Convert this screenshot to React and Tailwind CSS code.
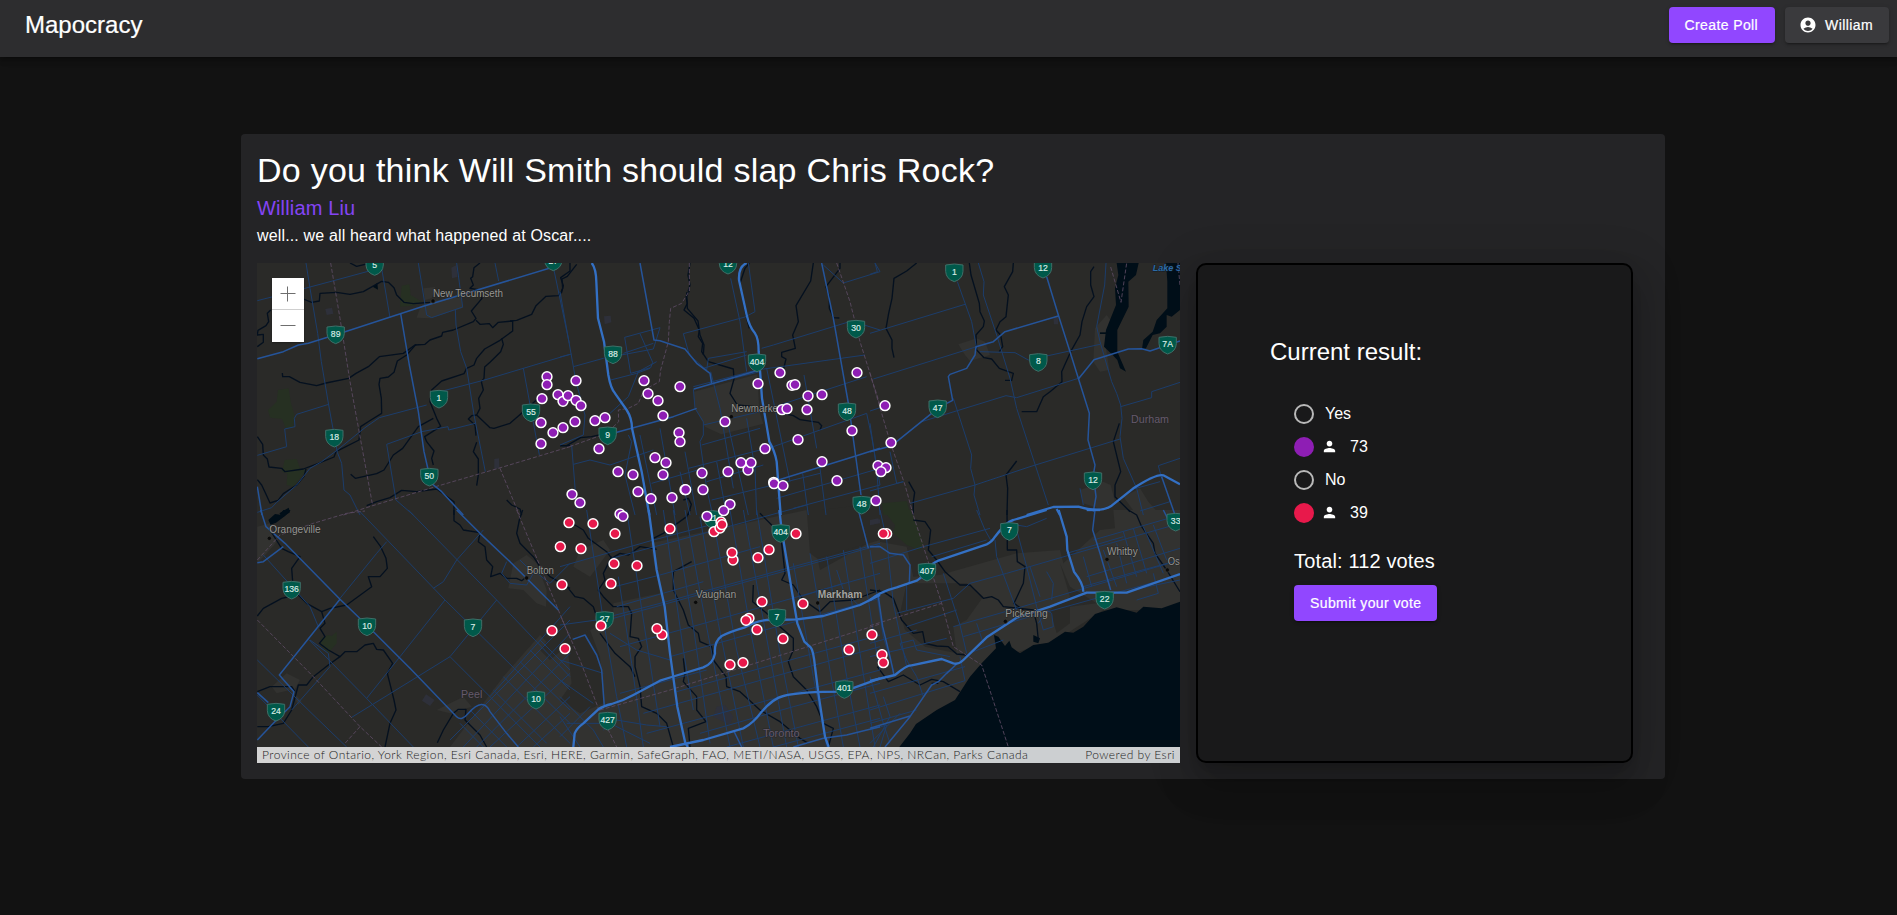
import React from "react";
import { MdAccountCircle, MdPerson } from "react-icons/md";

/* Map tiles: each holds its own drawing, placed by an offset on a shared canvas. */
const TILES = [
  {
    x: 0, y: 0,
    urban: ["M528 140L632 125L640 158L542 190L500 188L510 160Z", "M520 100L556 96L545 130L525 135Z"],
    park: ["M84 405L116 400L122 440L133 480L130 516L108 522L96 492L60 488L54 465L80 440Z", "M455 92L478 88L482 120L516 140L490 152L450 155Z", "M104 615L140 612L150 640L170 645L130 695L110 690L112 655L96 650Z"],
    grey: ["M604 38L620 30L622 66L606 70Z", "M226 162L246 158L250 176L230 180Z", "M733 612L747 610L748 640L733 642Z"],
    water: ["M88 775L116 758L120 772L100 785Z", "M368 95L382 83L384 104Z"],
    river: [
      "M160 132L185 142L208 138L210 115L260 112L300 118L340 110L372 92L395 79L415 82L432 98L440 120L462 142L490 146L540 142",
      "M300 24L320 34L345 28L365 24", "M62 165L52 175L56 200L48 212L24 226L22 240L40 238L40 262L22 275",
      "M690 24L672 38L668 65L662 70L670 90L660 100L685 104L696 130L664 168L678 190L670 200L610 225L578 232L575 243L540 255L525 268L495 270L460 295L388 305L355 335L318 355L296 370L228 384L200 392L150 382L118 365L98 365L97 354",
      "M498 268L470 300L442 318L432 352L415 366L390 370L387 388L394 430L395 475L358 498L332 515L327 555L258 590L252 606L205 625L160 642L105 650L95 640L57 636L52 612L40 600L38 568L22 545",
      "M168 642L162 664L140 690L100 716L84 736L60 744L48 718L35 690L22 674",
      "M678 196L690 208L718 206L728 218L745 202L788 198L788 228L750 256L704 282L680 310L672 330L650 340L642 356L575 378L545 405L540 440L560 490L572 514L524 545L530 560L552 588L545 610L550 630",
      "M550 490L505 515L458 580L430 600L402 645L380 656L316 670L302 658",
      "M960 24L960 48L932 68L940 92L935 112L925 122L888 124L858 152L845 178L800 196L780 198",
      "M755 250L760 268L752 290L720 322L704 336L702 370L694 380L700 405L686 430L690 460L680 480L720 518L732 520L780 505L820 470L870 425",
      "M678 542L675 510L655 492L665 482L680 480", "M680 562L670 590L685 612L685 660L680 692", "M350 752L380 740L420 728L455 706L500 710L560 702L612 740L612 780", "M770 735L785 750L810 762L815 780", "M930 572L960 572",
    ],
    minor: [
      "M22 137L120 112L240 80L380 42", "M168 24L180 100L203 235L214 320L236 450L262 592L275 625L282 705L300 720L330 780", "M395 40L420 188", "M505 24L530 180L545 188L638 156L620 24", "M616 165L618 210L632 290L650 340L672 480L706 650", "M735 24L746 78", "M910 36L958 265", "M960 298L700 376L570 410",
      "M530 450L388 488L345 518L262 585L215 620L180 640L140 690L80 742L65 758L22 772", "M236 448L140 478L133 490L135 515L104 522L110 575L22 601", "M676 505L596 525L594 515L515 530L410 568L438 735L490 780", "M820 340L868 600",
    ],
    major: ["M22 311L100 290L145 270L175 265L290 229L520 154L930 30", "M452 176L478 330L505 470L522 590L538 660", "M538 680L575 710L640 780", "M22 695L36 780"],
    hwy: [],
    border: ["M242 24L270 190L300 380L368 752", "M280 780L368 752L560 694L745 640L960 575", "M750 640L808 780"],
    shields: [[374, 34, "5"], [910, 20, "27"], [257, 239, "89"], [567, 432, "1"], [253, 549, "18"], [843, 473, "55"], [538, 666, "50"]],
  },
  {
    x: 930, y: 0,
    urban: ["M402 410L592 358L598 470L610 506L484 538L436 516L404 460Z"],
    park: [], grey: ["M132 184L152 182L154 202L134 208Z"], water: [],
    river: [
      "M50 28L22 64L6 72L8 100L0 118",
      "M388 108L378 125L382 145L372 165L402 190L418 225L415 245L428 265L425 290L445 320L520 342L522 372L510 415L532 450L590 456L700 482L720 494L775 502L785 512L780 525",
      "M390 24L384 60L390 90L384 110", "M380 112L382 160L414 198L420 240L432 270L430 300",
      "M568 24L555 40L540 85L548 130L555 165L560 190L568 220",
      "M760 24L752 78L708 152L715 200L698 240L706 280L665 292L665 305L678 312L670 345", "M840 24L840 40L798 95L808 125L808 160L820 188L838 189",
      "M0 572L20 572L62 548L95 545L125 538", "M370 735L385 730L394 748L385 780",
    ],
    minor: [
      "M0 110L48 380L75 480L70 540L0 570", "M0 306L35 297", "M40 335L130 310L280 282L300 218L194 247L212 355L272 338L278 322L240 236", "M190 295L280 265", "M152 375L230 355L270 340", "M150 475L205 425L235 350L290 320",
      "M370 236L555 186L585 170L565 24", "M370 236L388 300L440 345L445 310L560 290", "M605 280L640 270L875 198L960 225", "M430 340L560 300", "M512 70L540 200L560 350", "M452 350L480 460L520 700", "M445 388L600 350", "M400 395L590 345L915 300",
      "M205 540L215 560L195 660L225 780", "M35 570L50 760", "M40 628L90 615L150 630L280 585", "M430 510L600 470L720 430L920 365", "M425 570L600 520", "M400 400L405 460L430 500L430 540L420 560L440 700L458 780", "M385 640L640 575L920 475", "M375 590L410 780", "M240 540L290 780", "M500 490L565 780", "M560 490L585 640L590 780", "M440 680L610 630", "M455 735L640 690L780 655", "M275 685L430 640", "M728 655L745 780", "M780 640L798 780", "M920 475L935 545L960 690", "M650 730L960 640", "M732 360L770 580", "M790 30L850 84L960 50L945 24", "M700 760L960 690", "M620 340L690 680",
      "M300 520L345 780", "M360 650L390 780", "M470 620L500 780",
    ],
    major: ["M240 24L282 255L300 257L375 282L410 325L450 355L455 385", "M160 535L340 485L410 460", "M402 402L598 345", "M785 24L820 190L866 450L903 720", "M655 675L880 605L960 580"],
    hwy: ["M95 24Q108 40 109 80L114 190L132 260L145 360Q152 400 165 415L200 465Q216 490 216 520L245 650L268 780", "M560 24Q535 35 537 75L560 180Q568 215 585 235Q596 250 596 290L606 430L628 560Q645 590 650 620L662 780"],
    border: ["M388 24L388 108L365 145L332 160L328 200L325 260L302 345L298 380L252 405L235 445L205 460L175 465L176 500L140 535L20 578", "M830 24L870 140L900 260L960 450"],
    shields: [[504, 30, "12"], [159, 299, "88"], [591, 323, "404"], [888, 222, "30"], [861, 470, "48"], [143, 542, "9"], [905, 750, "48"]],
  },
  {
    x: 1860, y: 0,
    urban: ["M265 268L320 250L345 260L360 300L300 318L285 300Z", "M675 220L710 180L725 200L705 260L718 345L690 350L670 320Z", "M630 705L700 680L722 690L735 740L700 765L640 745Z", "M760 725L810 700L835 740L870 780L800 780Z"],
    park: ["M36 745L110 738L122 780L40 780Z"], grey: ["M550 186L564 184L564 208L552 208Z"],
    water: ["M740 24L806 24L798 60L775 80L776 155L742 225L742 290L768 350L750 340L742 315L728 300L702 275L708 225L722 190L738 150L735 100L745 60Z", "M888 24L930 24L930 165L905 185L890 180L890 215L870 235L848 240L828 280L816 282L820 255L848 230L860 195L892 160L892 80Z", "M690 232L712 232L712 237L690 237Z"],
    river: [
      "M140 24L110 48L72 70L66 130L56 175L48 220L66 255L66 280L72 308", "M298 24L303 60L328 145L330 170L343 198L340 215L318 240L320 285L342 308L365 312L388 340L430 355L425 376L405 376",
      "M430 24L428 50L403 95L415 120L408 185L390 200L378 225L392 240L398 275L388 290", "M672 35L662 50L662 90L672 125L650 155L636 200L630 240L602 290L575 350L576 380L540 410L520 425L500 470L455 470",
      "M440 618L408 660L413 700L411 780", "M116 680L134 712L130 740L130 780", "M748 505L730 560L752 650L735 690L735 725L780 770",
    ],
    minor: [
      "M0 58L22 50L15 24", "M0 235L285 148", "M262 80L305 200L320 280", "M10 372L320 275", "M325 24L342 80L340 120L380 240L420 370L440 460L535 750", "M330 290L435 293L475 315L690 268", "M155 500L408 422L440 428L625 370", "M250 430L305 600L302 640L315 690L312 720L330 780", "M120 745L315 690L480 635L750 552", "M708 24L704 90L680 215L690 260L725 380L740 415L752 450L756 490L750 545L760 610L800 700L820 780", "M752 455L845 428L845 410L930 382", "M930 610L865 632L875 670", "M0 505L20 640L30 780", "M60 590L80 685L100 680", "M0 708L100 680", "M0 468L40 455", "M630 700L640 750", "M780 705L870 680", "M810 768L900 740",
    ],
    major: ["M0 590L65 572L185 475", "M230 445L248 436L235 365L240 358L290 340L315 300L318 275L370 260L405 230L565 183", "M530 65L565 180L600 290L658 475L654 555L675 630L670 660", "M625 372L672 314L775 282L815 281L840 288L930 258", "M675 700L678 725L670 770", "M875 665L915 780"],
    hwy: ["M470 780L550 756L625 755Q690 775 725 752L790 700Q860 655 880 661L930 688", "M560 762L570 780"],
    border: ["M0 355L60 560L105 690L130 780", "M722 36L753 142L770 24", "M924 24L930 92"],
    shields: [[253, 53, "1"], [519, 42, "12"], [893, 270, "7A"], [505, 322, "8"], [203, 461, "47"], [669, 677, "12"]],
  },
  {
    x: 0, y: 765,
    urban: ["M22 50L60 40L85 90L50 130L22 158Z", "M65 530L110 490L150 510L130 545L155 575L145 585L120 540L80 550Z", "M790 160L830 135L860 160L890 240L888 290L860 280L820 240L775 235Z", "M600 711L760 500L870 375L890 395L870 420L900 450L960 400L960 711Z", "M560 600L640 560L665 590L600 610Z"],
    park: ["M212 385L235 375L245 378L260 365L260 400L235 430L212 405Z"], grey: ["M528 553L554 570L540 588L516 572Z"],
    water: ["M55 30L75 12L90 14L100 0L122 0L105 18L78 38L62 44Z"],
    river: [
      "M612 0L612 32L630 45L640 60L690 68L685 95L705 110L710 150L728 170L722 200L750 190L770 205L800 205L815 212L830 200", "M818 0L808 30L800 70L810 100L850 140L870 170L900 200L960 235",
      "M60 60L95 115L115 125L150 140L125 175L130 240L170 280L215 305L240 295L290 285L365 230L355 200L390 200L412 175L408 145L392 110L370 80",
      "M140 255L95 265L40 295L22 318", "M215 305L225 340L210 355L225 380L208 400L235 420L270 440L235 465L190 500L170 525L145 525L125 600L100 640L55 650L22 650", "M270 440L285 425L320 425L345 405L370 400L380 418L400 420L428 460L412 490L432 570L438 600L420 640L405 711", "M22 545L60 530L125 530L135 545", "M562 698L580 660L610 610L625 598L648 598L645 630L690 675L710 711",
    ],
    minor: [
      "M330 5L585 270L960 640", "M475 0L740 270L960 500", "M22 450L180 605L290 711", "M22 555L175 711", "M40 135L180 290L205 350", "M178 390L340 555L490 711", "M410 95L380 130L270 265", "M600 440L760 600L870 711", "M740 270L600 440L305 622", "M700 60L620 150L580 215L550 235", "M585 270L450 440L350 565", "M760 500L800 540L960 700", "M730 540L890 700", "M870 390L960 480", "M840 420L960 540", "M810 455L960 600", "M660 600L770 711", "M630 640L700 711", "M720 560L960 290", "M600 690L960 330", "M640 711L960 370", "M680 711L960 430", "M720 711L960 490", "M800 711L960 560", "M850 711L960 610", "M770 155L755 190L780 220L830 225L850 190L810 150", "M850 180L900 220L960 160", "M180 390L235 430L240 470L125 600",
    ],
    major: ["M32 0L48 50L105 100L270 268L350 345L480 475L620 620Q635 635 655 610Q700 560 720 605L770 670L805 711", "M22 158L40 155L100 110", "M270 268L88 495L132 545L120 590L70 640L22 690", "M22 548L55 578", "M620 0L690 70L780 155L850 225L925 300"],
    hwy: [],
    border: ["M22 330L190 500L330 650L395 711", "M330 650L285 700", "M22 150L90 75L190 40L290 10L345 3", "M800 0L925 300L960 385"],
    shields: [[125, 240, "136"], [351, 350, "10"], [669, 353, "7"], [78, 606, "24"], [858, 570, "10"]],
  },
  {
    x: 930, y: 765,
    urban: ["M0 530L40 470L20 390L160 330L160 280L300 250L270 100L600 30L740 0L780 180L960 80L960 760L0 760Z", "M60 120L130 90L150 120L90 200L40 170Z"],
    park: [], grey: ["M470 590L495 585L520 620L510 645L460 620Z", "M930 35L960 28L960 40L935 44Z"], water: [],
    dark: ["M20 390L90 360L120 440L130 580L60 610L0 570L35 520Z", "M740 0L780 0L960 -20L960 90L770 145L750 130Z"],
    river: [
      "M20 30L70 60L85 85L140 125L155 145L180 130L205 135L240 110L290 118", "M390 0L380 20L310 70L280 85", "M155 140L130 190L135 210L115 240L130 260L160 290L205 290L215 310L210 380L235 385L245 410L225 440L225 470L240 530L245 590L290 610L320 640L340 711",
      "M0 210L25 235L45 260L70 265L100 290L110 320", "M120 370L165 430L210 470L225 500", "M395 155L340 185L340 240L370 300L385 345L415 370L420 395L455 410L460 450L498 500L500 530L540 545L600 600L660 635L720 685L745 700",
      "M370 445L375 490L370 515L410 560L410 600L438 635L385 655L390 711", "M600 10L650 60L665 100L675 190L665 210L700 225L730 270L780 305L810 275L880 270L960 240", "M580 225L578 275L620 310L660 350L700 385L700 420L685 455L700 500L740 540L770 590L790 640L820 655L805 711",
    ],
    minor: [
      "M0 170L280 90L450 45", "M155 145L450 65L740 -15", "M145 235L300 195L600 110", "M160 325L450 245L960 105", "M170 290L430 215", "M0 345L110 330L300 280L700 170L960 100", "M180 410L450 335L960 190", "M330 440L560 375L960 265", "M180 550L440 480", "M350 545L960 375", "M250 610L480 545L960 410", "M260 670L700 550L960 480", "M420 670L700 590L960 520", "M500 711L960 585", "M640 711L960 625", "M0 450L130 490", "M0 510L100 580", "M0 560L100 660L130 711", "M0 620L60 711", "M0 680L90 590",
      "M80 0L130 330L170 560L200 711", "M175 200L215 460L250 711", "M200 0L250 330L300 650", "M310 0L370 420L400 600", "M340 0L400 350L450 700", "M375 0L430 300L510 711", "M420 20L475 340L550 711", "M460 30L530 420L600 711", "M510 0L575 380L640 711", "M550 0L610 330L680 711", "M590 0L660 430L715 711", "M700 160L760 500L800 711", "M750 130L810 480L850 711", "M800 140L860 500L900 711", "M850 120L900 430L945 711", "M900 110L950 430L960 480", "M150 370L230 420L330 450", "M130 660L170 630L260 645L320 650", "M20 640L150 640L270 700", "M720 260L850 220", "M830 180L850 240L900 290",
    ],
    major: ["M38 388L75 375L110 435L125 480L133 590", "M700 711L790 685L860 675L960 650", "M895 0L925 115", "M520 660L545 711"],
    hwy: ["M266 0L290 180L314 290L330 430L352 590L376 700L384 711", "M40 711L44 670Q50 655 70 640L115 598Q130 588 155 582Q190 572 220 555L300 512L345 498L430 472Q460 460 465 430Q462 395 485 378Q510 365 555 352Q600 325 650 330L710 328L790 318L900 285L960 255", "M330 711L430 690L550 655Q580 640 605 605Q640 565 670 558Q720 545 850 545L960 505", "M658 0L665 60L690 210L712 340L733 395L752 412Q760 420 765 470L775 550L795 680L806 711"],
    border: ["M5 325L60 450L115 595L145 660L170 711", "M120 600L330 540L960 342"],
    shields: [[458, 28, "11"], [662, 70, "404"], [134, 331, "27"], [651, 323, "7"], [853, 538, "401"], [143, 633, "427"]],
  },
  {
    x: 1860, y: 765,
    urban: ["M0 90L110 110L130 200L210 195L440 130L570 120L580 160L690 60L735 55L730 0L930 0L930 300L700 300L560 390L430 430L300 560L110 711L0 711Z"],
    park: ["M40 0L125 0L160 100L150 122L110 105L70 70L75 45Z"], grey: ["M0 30L25 25L28 38L0 46Z"],
    dark: ["M110 220L290 220L340 260L290 330L250 350L260 430L165 410L105 360L90 310Z", "M570 160L600 230L680 280L600 290L600 340L560 370L540 300L600 260Z"],
    water: ["M88 711L120 670L138 642L200 600L255 570L300 500L335 460L378 415L372 375L385 380L405 408L418 392L425 412L450 430L490 405L535 398L585 365L610 368L640 350L675 312L740 292L800 308L820 290L875 295L930 275L930 765L88 765Z", "M490 375L510 385L505 400L490 395Z"],
    river: [
      "M130 30L165 35L182 60L175 120L200 150L225 185L270 225L300 225L340 265L365 260L385 270L400 290L450 295L490 300L500 340L505 390", "M411 0L412 120L440 120L442 155L465 170L460 220L432 280L460 300", "M0 240L40 245L70 265L95 330L130 370L158 365L165 400L200 408L235 410L260 432L290 435", "M22 470L55 515L100 495L150 525L185 508L220 515L270 545", "M775 0L800 15L815 50L850 100L855 130L890 180L930 245", "M185 520L205 520",
    ],
    minor: [
      "M0 160L160 110L360 55", "M185 140L350 90", "M80 310L250 265L300 220L410 190L720 100L930 40", "M110 350L260 300", "M250 350L440 295L930 150", "M280 380L480 320L930 195", "M310 425L400 390", "M90 400L130 390L140 420L240 440", "M0 400L140 360", "M0 440L230 385", "M0 550L285 470", "M0 600L285 512L270 440", "M0 640L140 600", "M30 0L50 90L70 280L110 470", "M0 120L40 380L70 480", "M90 400L110 450L140 500L160 560", "M0 500L40 640L60 700", "M0 660L50 645L30 711", "M40 560L60 620L10 711", "M320 0L345 60L362 90", "M375 90L380 140L440 300", "M440 60L470 170L500 290L520 360L550 350L545 310L530 300L505 340", "M220 190L270 345L290 430", "M110 220L110 300", "M480 170L510 260", "M530 185L550 220L545 270", "M640 140L665 230", "M700 120L740 230", "M740 100L770 220", "M760 65L800 200", "M790 55L830 190", "M820 50L880 190", "M850 45L890 150", "M670 90L930 15", "M650 200L930 115", "M640 230L780 190L930 150", "M590 130L760 80", "M800 270L865 250L850 190", "M785 240L930 210", "M320 340L340 400", "M440 45L470 50L530 25", "M0 700L90 610",
    ],
    major: ["M0 110L30 110L60 130L100 135L120 165L118 220", "M25 260L38 350L60 440L72 495", "M260 462L230 490L205 515L185 525L120 620L45 711", "M0 655L120 618", "M675 0L668 60L690 130L722 240", "M880 0L895 30"],
    hwy: ["M0 270Q30 245 80 232L140 212Q160 200 170 180Q185 160 205 152L350 103Q365 97 375 80Q410 35 430 30L530 0", "M0 513L75 495Q110 465 125 466L215 447L250 460Q265 465 280 450L350 382L440 323L540 290L650 248L770 248L930 192", "M566 0L590 80L592 120L612 185Q640 220 640 245", "M650 0L690 0"],
    border: ["M125 0L215 280L250 410L335 465L415 711", "M0 347L215 280"],
    shields: [[418, 64, "7"], [171, 186, "407"], [704, 270, "22"], [917, 36, "33"]],
  },
];

const YES = [
  [891, 365], [891, 389], [876, 431], [924, 419], [939, 439], [954, 422], [978, 436], [993, 452], [978, 377], [873, 503], [909, 533], [939, 518], [873, 566], [975, 500], [1035, 497], [1065, 488], [1047, 581],
  [1182, 377], [1194, 416], [1224, 437], [1239, 482], [1290, 395], [1287, 533], [1290, 560], [1524, 386], [1590, 353], [1626, 391], [1635, 389], [1674, 423], [1716, 419], [1671, 464], [1596, 464], [1611, 461], [1425, 500],
  [1821, 353], [1806, 527], [1644, 554], [1545, 581], [1215, 608], [1248, 623], [1239, 659], [1104, 650], [1149, 659], [1356, 654], [1434, 650], [1494, 645], [1473, 623], [1503, 623], [1716, 620], [1761, 677],
  [1164, 710], [1203, 731], [1266, 728], [1305, 704], [1307, 704], [1359, 704], [1571, 682], [1572, 686], [1599, 692], [966, 718], [990, 743], [1110, 777], [1119, 784], [1371, 784], [1440, 748], [1421, 767],
  [1884, 632], [1908, 638], [1893, 650], [1878, 737], [1905, 452], [1923, 563],
];

const NO = [
  [27, 38], [99, 41], [165, 71], [1, 110], [63, 116], [162, 161], [231, 167], [6, 224], [153, 221], [330, 56], [462, 65], [480, 54], [483, 36], [486, 44], [519, 150], [516, 128], [594, 143], [627, 119], [708, 71],
  [606, 275], [729, 281], [567, 325], [558, 331], [591, 359], [669, 386], [510, 464], [549, 458], [867, 419], [936, 374], [123, 347], [306, 374], [291, 356], [15, 416], [-24, 362], [980, 71], [970, 71], [966, 434], [970, 458],
];

/* text, x, baseline, width, kind, dot */
const LABELS = [
  ["New Tecumseth", 549, 126, 210, "town", [549, 138]],
  ["Newmarket", 1444, 472, 148, "town", [1444, 485]],
  ["Orangeville", 58, 835, 154, "town", [58, 850]],
  ["Bolton", 830, 956, 82, "town", [830, 969]],
  ["Vaughan", 1337, 1028, 122, "town", [1337, 1042]],
  ["Markham", 1703, 1029, 134, "city", [1703, 1044]],
  ["Pickering", 2266, 1086, 127, "town", [2266, 1099]],
  ["Whitby", 2571, 899, 92, "town", [2571, 913]],
  ["Oshawa", 2753, 931, 104, "town", [2752, 945]],
  ["Durham", 2643, 504, 114, "region", null],
  ["Peel", 633, 1330, 64, "region", null],
  ["Toronto", 1539, 1447, 110, "region", null],
  ["Lake Scugog", 2708, 48, 168, "lake", null],
];

const LABEL_STYLE = {
  town: "fill-[#969693] text-[30px] stroke-[#222221]",
  city: "fill-[#a3a3a0] text-[30px] font-bold stroke-[#222221]",
  region: "fill-[#655a6c] text-[32px] stroke-[#262626]",
  lake: "fill-[#2d6ba5] text-[27px] font-bold italic stroke-[#101b26]",
};

function Lines({ list, className }) {
  return list.map((d, i) => <path key={i} d={d} className={className} />);
}

function Layer({ pick, className }) {
  return TILES.map((t, i) => (
    <g key={i} transform={`translate(${t.x} ${t.y})`}>
      <Lines list={t[pick] || []} className={className} />
    </g>
  ));
}

function Shield({ x, y, label }) {
  return (
    <g transform={`translate(${x} ${y})`}>
      <path
        d="M-26 -23Q0 -29 26 -23L26 -4Q25 19 0 27Q-25 19 -26 -4Z"
        className="fill-[#00594a] stroke-[#3f6f68] stroke-[3]"
      />
      <text y="6" textAnchor="middle" className="fill-[#d8ebe6] text-[26px] stroke-[#d8ebe6] stroke-[0.5]">
        {label}
      </text>
    </g>
  );
}

function PollMap() {
  return (
    <svg viewBox="21 24 2769 1500" className="block h-[500px] w-[923px]" fill="none" strokeLinejoin="round">
      <rect x="0" y="0" width="2800" height="1530" className="fill-[#2a2a28]" />
      <Layer pick="urban" className="fill-[#323230]" />
      <Layer pick="dark" className="fill-[#2a2a28]" />
      <Layer pick="park" className="fill-[#263022]" />
      <Layer pick="grey" className="fill-[#2e303a]" />
      <Layer pick="water" className="fill-[#000e18]" />
      <Layer pick="river" className="stroke-[#04101f] stroke-[4]" />
      <Layer pick="minor" className="stroke-[#1c3d6b] stroke-[3]" />
      <Layer pick="border" className="stroke-[#5b4a62] stroke-[2.6] [stroke-dasharray:12_6]" />
      <Layer pick="major" className="stroke-[#25549a] stroke-[4.5]" />
      <Layer pick="hwy" className="stroke-[#3370c4] stroke-[7]" />
      {TILES.map((t, i) => (
        <g key={i} transform={`translate(${t.x} ${t.y})`}>
          {t.shields.map(([x, y, label]) => (
            <Shield key={`${x}-${y}`} x={x} y={y} label={label} />
          ))}
        </g>
      ))}
      {LABELS.map(([text, x, y, width, kind, dot]) => (
        <g key={text}>
          {dot && <circle cx={dot[0]} cy={dot[1]} r="6.5" className="fill-[#0a0a0a] stroke-[#3d3d3a] stroke-[2]" />}
          <text x={x} y={y} textLength={width} lengthAdjust="spacingAndGlyphs" className={`${LABEL_STYLE[kind]} stroke-[3] [paint-order:stroke]`}>
            {text}
          </text>
        </g>
      ))}
      <g className="fill-[#8e1eb4] stroke-white stroke-[4.5]">
        {YES.map(([x, y], i) => <circle key={i} cx={x} cy={y} r="14.8" />)}
      </g>
      <g className="fill-[#e8194b] stroke-white stroke-[4.5]" transform="translate(930 765)">
        {NO.map(([x, y], i) => <circle key={i} cx={x} cy={y} r="14.8" />)}
      </g>
    </svg>
  );
}

function Button({ className, children }) {
  return (
    <button
      className={`flex h-9 items-center rounded-[4px] text-sm tracking-[0.4px] [-webkit-text-stroke:0.2px_white] shadow-[0_3px_1px_-2px_rgba(0,0,0,0.2),0_2px_2px_0_rgba(0,0,0,0.14),0_1px_5px_0_rgba(0,0,0,0.12)] ${className}`}
    >
      {children}
    </button>
  );
}

function Option({ label, count, color }) {
  return (
    <>
      <div className="flex h-[33px] items-center">
        <span className="size-5 rounded-full border-2 border-[#b9b9b9]" />
        <span className="ml-[11px]">{label}</span>
      </div>
      <div className="flex h-[33px] items-center">
        <span className={`size-5 rounded-full ${color}`} />
        <MdPerson className="ml-[7px] size-[17px]" />
        <span className="ml-3">{count}</span>
      </div>
    </>
  );
}

export default function App() {
  return (
    <div className="h-[915px] w-full overflow-hidden bg-[#121212] font-['Liberation_Sans',Arial,sans-serif] text-base text-white">
      <header className="flex h-[57px] items-start justify-between bg-[#2d2d2f] pt-[7px] pr-2 pl-[25px] shadow-[0_2px_4px_-1px_rgba(0,0,0,0.2),0_4px_5px_0_rgba(0,0,0,0.14),0_1px_10px_0_rgba(0,0,0,0.12)]">
        <h1 className="text-2xl leading-9 [-webkit-text-stroke:0.2px_white]">Mapocracy</h1>
        <div className="flex gap-[10px]">
          <Button className="bg-[#9147ff] pr-[17px] pl-[15px]">Create Poll</Button>
          <Button className="bg-[#3a3a3d] pr-4 pl-[14px]">
            <MdAccountCircle className="mr-2 size-[18px]" />
            William
          </Button>
        </div>
      </header>

      <main className="mt-[77px] ml-[241px] flex h-[645px] w-[1424px] flex-col rounded-[4px] bg-[#242426] px-4 pt-[15px]">
        <h2 className="mb-px text-[34px] leading-[42px] tracking-[0.25px]">Do you think Will Smith should slap Chris Rock?</h2>
        <p className="text-xl leading-8 tracking-[0.15px] text-[#8544f5]">William Liu</p>
        <p className="leading-6 tracking-[0.15px]">well... we all heard what happened at Oscar....</p>

        <div className="mt-[15px] flex gap-4">
          <div className="relative h-[500px] w-[923px] shrink-0 overflow-hidden">
            <PollMap />
            <div className="absolute top-[15px] left-[15px] flex w-8 flex-col divide-y divide-[#cfcfcf] bg-white text-[#6e6e6e] shadow-[0_1px_2px_rgba(0,0,0,0.3)]">
              <button className="flex h-8 items-center justify-center" aria-label="Zoom in">
                <svg viewBox="0 0 16 16" className="size-4" stroke="currentColor"><path d="M0.5 7.5H15.5M7.5 0.5V15.5" /></svg>
              </button>
              <button className="flex h-8 items-center justify-center" aria-label="Zoom out">
                <svg viewBox="0 0 16 16" className="size-4" stroke="currentColor"><path d="M0.5 7.5H15.5" /></svg>
              </button>
            </div>
            <div className="absolute inset-x-0 bottom-0 flex h-4 items-center justify-between bg-white/80 px-[5px] font-['Lato',sans-serif] text-xs leading-4 font-light tracking-[0.46px] whitespace-nowrap text-[#1c1c1c]">
              <span>
                Province of Ontario, York Region, Esri Canada, Esri, HERE, Garmin, SafeGraph, FAO, METI/NASA, USGS, EPA, NPS, NRCan, Parks Canada
              </span>
              <span>Powered by Esri</span>
            </div>
          </div>

          <section className="h-[500px] w-[437px] rounded-[10px] border-2 border-black bg-[#19191a] pt-[71px] pl-[72px] shadow-[0_11px_15px_-7px_rgba(0,0,0,0.2),0_24px_38px_3px_rgba(0,0,0,0.14),0_9px_46px_8px_rgba(0,0,0,0.12)]">
            <h3 className="text-2xl leading-8">Current result:</h3>
            <div className="mt-[29px] pl-6">
              <Option label="Yes" count="73" color="bg-[#8e1eb4]" />
              <Option label="No" count="39" color="bg-[#e8194b]" />
              <p className="mt-4 text-xl leading-8 tracking-[0.15px]">Total: 112 votes</p>
              <Button className="mt-2 bg-[#9147ff] px-4">Submit your vote</Button>
            </div>
          </section>
        </div>
      </main>
    </div>
  );
}
